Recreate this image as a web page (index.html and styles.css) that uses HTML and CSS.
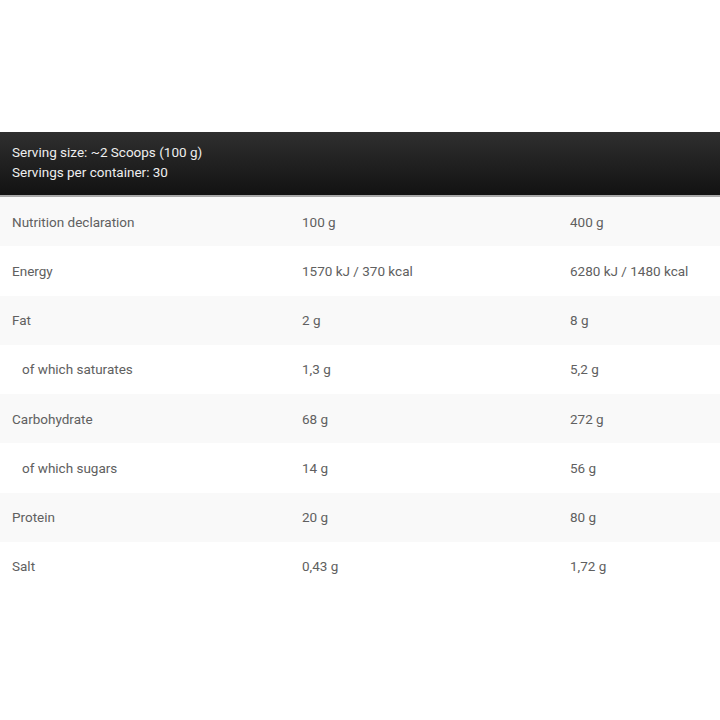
FILE: index.html
```html
<!DOCTYPE html>
<html>
<head>
<meta charset="utf-8">
<link rel="stylesheet" href="styles.css">
</head>
<body>
<div class="page">
  <div class="serving">
    <div>Serving size: ~2 Scoops (100 g)</div>
    <div>Servings per container: 30</div>
  </div>
  <div class="table">
    <div class="row alt"><div>Nutrition declaration</div><div>100 g</div><div>400 g</div></div>
    <div class="row"><div>Energy</div><div>1570 kJ / 370 kcal</div><div>6280 kJ / 1480 kcal</div></div>
    <div class="row alt"><div>Fat</div><div>2 g</div><div>8 g</div></div>
    <div class="row"><div class="sub">of which saturates</div><div>1,3 g</div><div>5,2 g</div></div>
    <div class="row alt"><div>Carbohydrate</div><div>68 g</div><div>272 g</div></div>
    <div class="row"><div class="sub">of which sugars</div><div>14 g</div><div>56 g</div></div>
    <div class="row alt"><div>Protein</div><div>20 g</div><div>80 g</div></div>
    <div class="row"><div>Salt</div><div>0,43 g</div><div>1,72 g</div></div>
  </div>
</div>
</body>
</html>
```
FILE: styles.css
```css
html, body {
  margin: 0;
  padding: 0;
  background: #fff;
}
.page {
  padding-top: 132px;
  font-family: Roboto, "Liberation Sans", sans-serif;
  font-size: 13.5px;
}
.serving {
  background: linear-gradient(#2f2f2f, #121212);
  color: #eee;
  padding: 10px 12px 13px;
  line-height: 20px;
  border-bottom: 2px solid #a8a8a8;
}
.table {
  color: #606060;
}
.row {
  display: grid;
  grid-template-columns: 290px 268px 1fr;
  align-items: center;
  height: 49.25px;
  padding-left: 12px;
}
.row.alt {
  background: #f9f9f9;
}
.sub {
  padding-left: 10px;
}
```
